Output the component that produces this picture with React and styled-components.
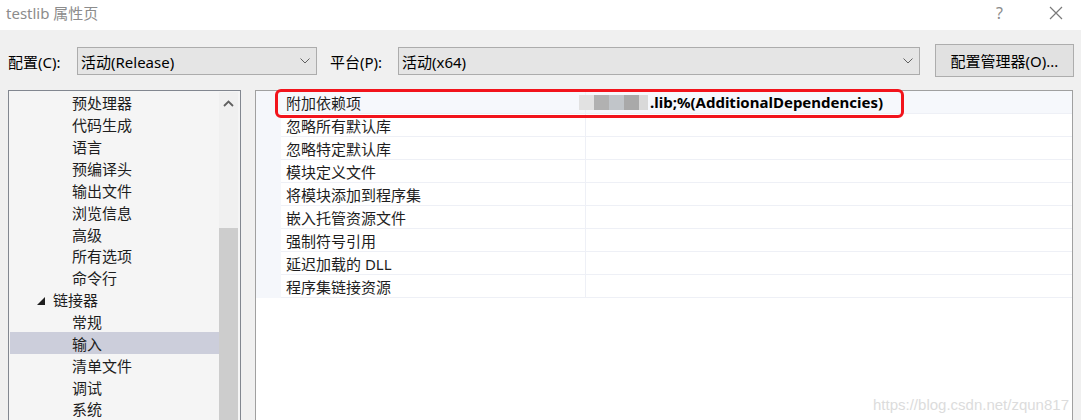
import React from 'react'
import styled, { createGlobalStyle } from 'styled-components'

const GlobalStyle = createGlobalStyle`
  body {
    margin: 0;
    font-family: "Noto Sans", "Noto Sans CJK SC", sans-serif;
    font-size: 15px;
    color: #1b1b1b;
  }
`

const treeItems = [
  { label: '预处理器', level: 2 },
  { label: '代码生成', level: 2 },
  { label: '语言', level: 2 },
  { label: '预编译头', level: 2 },
  { label: '输出文件', level: 2 },
  { label: '浏览信息', level: 2 },
  { label: '高级', level: 2 },
  { label: '所有选项', level: 2 },
  { label: '命令行', level: 2 },
  { label: '链接器', level: 1, open: true },
  { label: '常规', level: 2 },
  { label: '输入', level: 2, selected: true },
  { label: '清单文件', level: 2 },
  { label: '调试', level: 2 },
  { label: '系统', level: 2 },
]

const props = [
  '附加依赖项',
  '忽略所有默认库',
  '忽略特定默认库',
  '模块定义文件',
  '将模块添加到程序集',
  '嵌入托管资源文件',
  '强制符号引用',
  '延迟加载的 DLL',
  '程序集链接资源',
]

function Chevron() {
  return (
    <svg width="10" height="6" viewBox="0 0 10 6">
      <path d="M0.5 0.5 L5 5 L9.5 0.5" fill="none" stroke="#606060" strokeWidth="1" />
    </svg>
  )
}

function App() {
  return (
    <Window>
      <GlobalStyle />
      <TitleBar>
        <Title>testlib 属性页</Title>
        <TitleButtons>
          <Help>?</Help>
          <svg width="14" height="14" viewBox="0 0 14 14">
            <path d="M1 1 L13 13 M13 1 L1 13" stroke="#7a7a7a" strokeWidth="1.2" />
          </svg>
        </TitleButtons>
      </TitleBar>

      <Toolbar>
        <Label width={69}>配置(C):</Label>
        <Select width={240}>
          <span>活动(Release)</span>
          <Chevron />
        </Select>
        <Label width={68} gap={13}>平台(P):</Label>
        <Select width={522}>
          <span>活动(x64)</span>
          <Chevron />
        </Select>
        <Button>配置管理器(O)...</Button>
      </Toolbar>

      <Main>
        <TreePanel>
          <TreeList>
            {treeItems.map((it) => (
              <TreeRow key={it.label} selected={it.selected} level={it.level}>
                {it.open && <Caret />}
                {it.label}
              </TreeRow>
            ))}
          </TreeList>
          <ScrollBar>
            <ScrollUp>
              <svg width="11" height="7" viewBox="0 0 11 7">
                <path d="M1 6 L5.5 1.5 L10 6" fill="none" stroke="#606060" strokeWidth="1.8" />
              </svg>
            </ScrollUp>
            <Thumb />
          </ScrollBar>
        </TreePanel>

        <PropPanel>
          <Gutter />
          <Grid>
            {props.map((p, i) => (
              <PropRow key={p} first={i === 0}>
                <NameCell>{p}</NameCell>
                <ValueCell>
                  {i === 0 && (
                    <>
                      <Mosaic />
                      <Strong>.lib;%(AdditionalDependencies)</Strong>
                    </>
                  )}
                </ValueCell>
              </PropRow>
            ))}
          </Grid>
          <Highlight />
          <Watermark>https://blog.csdn.net/zqun817</Watermark>
        </PropPanel>
      </Main>
    </Window>
  )
}

export default App

const Window = styled.div`
  width: 1081px;
  height: 420px;
  overflow: hidden;
  background: #f0f0f0;
  display: flex;
  flex-direction: column;
`

const TitleBar = styled.div`
  height: 30px;
  background: #ffffff;
  display: flex;
  align-items: center;
  justify-content: space-between;
  padding: 0 18px 0 6px;
  flex-shrink: 0;
`

const Title = styled.div`
  color: #8c8c8c;
  font-size: 15px;
  margin-top: -6px;
`

const TitleButtons = styled.div`
  display: flex;
  align-items: center;
  gap: 46px;
  margin-top: -4px;
`

const Help = styled.span`
  color: #8c8c8c;
  font-size: 16px;
`

const Toolbar = styled.div`
  height: 60px;
  display: flex;
  align-items: center;
  padding: 2px 0 0 8px;
  box-sizing: border-box;
  flex-shrink: 0;
`

const Label = styled.span`
  width: ${(p) => p.width}px;
  margin-left: ${(p) => p.gap || 0}px;
  flex-shrink: 0;
  color: #000;
  white-space: nowrap;
`

const Select = styled.div`
  width: ${(p) => p.width}px;
  flex-shrink: 0;
  height: 28px;
  box-sizing: border-box;
  border: 1px solid #acacac;
  background: #e5e5e5;
  display: flex;
  align-items: center;
  justify-content: space-between;
  padding: 0 6px 0 3px;
  color: #000;
`

const Button = styled.div`
  margin-left: 15px;
  width: 139px;
  flex-shrink: 0;
  height: 33px;
  box-sizing: border-box;
  border: 1px solid #adadad;
  background: #e1e1e1;
  display: flex;
  align-items: center;
  justify-content: center;
  color: #000;
  margin-top: -2px;
`

const Main = styled.div`
  flex: 1;
  display: flex;
  gap: 14px;
  padding: 0 8px 0 8px;
  min-height: 0;
`

const TreePanel = styled.div`
  width: 233px;
  border: 1px solid #828790;
  border-bottom: none;
  background: #f5f5f5;
  display: flex;
  box-sizing: border-box;
  padding: 1px 2px 0 1px;
`

const TreeList = styled.div`
  flex: 1;
  display: flex;
  flex-direction: column;
`

const TreeRow = styled.div`
  height: 22px;
  display: flex;
  align-items: center;
  padding-left: ${(p) => (p.level === 1 ? 43 : 62)}px;
  background: ${(p) => (p.selected ? '#cccedb' : 'transparent')};
  color: #1e1e1e;
  white-space: nowrap;
  position: relative;
`

const Caret = styled.span`
  position: absolute;
  left: 27px;
  top: 8px;
  width: 0;
  height: 0;
  border-left: 8px solid transparent;
  border-bottom: 8px solid #1e1e1e;
`

const ScrollBar = styled.div`
  width: 19px;
  display: flex;
  flex-direction: column;
  background: #f0f0f0;
`

const ScrollUp = styled.div`
  height: 22px;
  display: flex;
  align-items: center;
  justify-content: center;
`

const Thumb = styled.div`
  margin-top: 114px;
  flex: 1;
  background: #cdcdcd;
`

const PropPanel = styled.div`
  flex: 1;
  border: 1px solid #a0a0a0;
  border-bottom: none;
  background: #ffffff;
  position: relative;
  display: flex;
  align-items: flex-start;
`

const Gutter = styled.div`
  width: 25px;
  height: 207px;
  background: #f5f7fb;
`

const Grid = styled.div`
  flex: 1;
  display: flex;
  flex-direction: column;
`

const PropRow = styled.div`
  height: 23px;
  display: flex;
  border-bottom: 1px solid #eef0f6;
  box-sizing: border-box;
  background: ${(p) => (p.first ? '#f6f8fc' : '#ffffff')};
`

const NameCell = styled.div`
  width: 299px;
  flex-shrink: 0;
  border-right: 1px solid #eef0f6;
  display: flex;
  align-items: center;
  padding-left: 5px;
  color: #1e1e1e;
  white-space: nowrap;
`

const ValueCell = styled.div`
  flex: 1;
  display: flex;
  align-items: center;
  white-space: nowrap;
`

const Mosaic = styled.span`
  width: 69px;
  height: 15px;
  margin: 0 2px 0 -7px;
  background: linear-gradient(
    to right,
    #e2e2e2 0 15px,
    #b1b1b1 15px 30px,
    #c1c5c9 30px 45px,
    #a9a9a9 45px 60px,
    #d9d9d9 60px 69px
  );
`

const Strong = styled.span`
  font-weight: bold;
  color: #000;
  font-size: 15px;
`

const Highlight = styled.div`
  position: absolute;
  left: 19px;
  top: -2px;
  width: 629px;
  height: 29px;
  box-sizing: border-box;
  border: 3px solid #f2141c;
  border-radius: 6px;
  pointer-events: none;
`

const Watermark = styled.div`
  position: absolute;
  right: 3px;
  bottom: 7px;
  color: #dcdcdc;
  font-family: "Liberation Sans", Arial, sans-serif;
  font-size: 15px;
`
